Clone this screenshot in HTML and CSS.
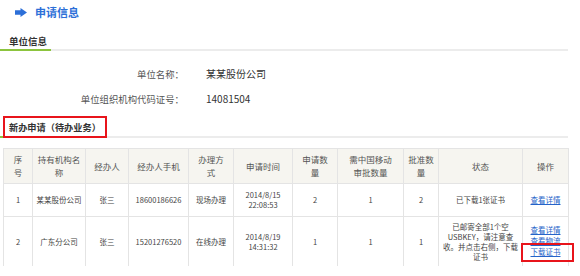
FILE: index.html
```html
<!DOCTYPE html>
<html lang="zh-CN">
<head>
<meta charset="utf-8">
<title>申请信息</title>
<link rel="stylesheet" href="styles.css">
</head>
<body>
<div class="page">
  <h1 class="page-title">
    <svg class="title-icon" width="12" height="9" viewBox="0 0 12 9"><path d="M0 2.2h5.5V0L12 4.5 5.5 9V6.8H0z" fill="#2c6fd8"/></svg>
    <span>申请信息</span>
  </h1>

  <div class="tab-bar">
    <span class="tab">单位信息</span>
  </div>

  <div class="info">
    <div class="info-row"><span class="label">单位名称：</span><span class="value">某某股份公司</span></div>
    <div class="info-row"><span class="label">单位组织机构代码证号：</span><span class="value">14081504</span></div>
  </div>

  <div class="tab-bar tab-bar-second">
    <span class="tab tab-marked">新办申请（待办业务）</span>
  </div>

  <table class="grid">
    <colgroup>
      <col style="width:29px"><col style="width:53px"><col style="width:43px"><col style="width:60px">
      <col style="width:45px"><col style="width:59px"><col style="width:45px"><col style="width:66px">
      <col style="width:35px"><col style="width:84px"><col style="width:46px">
    </colgroup>
    <thead>
      <tr>
        <th>序<br>号</th>
        <th>持有机构名<br>称</th>
        <th>经办人</th>
        <th>经办人手机</th>
        <th>办理方<br>式</th>
        <th>申请时间</th>
        <th>申请数<br>量</th>
        <th>需中国移动<br>审批数量</th>
        <th>批准数<br>量</th>
        <th>状态</th>
        <th>操作</th>
      </tr>
    </thead>
    <tbody>
      <tr class="row-1">
        <td>1</td>
        <td>某某股份公司</td>
        <td>张三</td>
        <td>18600186626</td>
        <td>现场办理</td>
        <td>2014/8/15<br>22:08:53</td>
        <td>2</td>
        <td>1</td>
        <td>2</td>
        <td>已下载1张证书</td>
        <td><a class="link" href="#">查看详情</a></td>
      </tr>
      <tr class="row-2">
        <td>2</td>
        <td>广东分公司</td>
        <td>张三</td>
        <td>15201276520</td>
        <td>在线办理</td>
        <td>2014/8/19<br>14:31:32</td>
        <td>1</td>
        <td>1</td>
        <td>1</td>
        <td class="status">已邮寄全部1个空<br>USBKEY，请注意查<br>收。并点击右侧，下载<br>证书</td>
        <td class="ops">
          <a class="link" href="#">查看详情</a>
          <a class="link" href="#">查看物流</a>
          <a class="link link-marked" href="#">下载证书</a>
        </td>
      </tr>
    </tbody>
  </table>
</div>
</body>
</html>
```

FILE: styles.css
```css
html, body {
  margin: 0;
  padding: 0;
  background: #ffffff;
}

body {
  font-family: "Noto Sans CJK SC", "Liberation Sans", sans-serif;
  color: #333333;
  width: 580px;
  height: 276px;
  overflow: hidden;
}

.page {
  width: 580px;
}

.page-title {
  margin: 0;
  height: 24px;
  display: flex;
  align-items: center;
  padding-left: 15px;
  font-size: 11px;
  font-weight: bold;
  color: #2c6fd8;
  line-height: 24px;
}

.title-icon {
  display: block;
  margin-right: 8px;
}

.tab-bar {
  margin-top: 10px;
  width: 568px;
  border-bottom: 2px solid #ececec;
  display: flex;
}

.tab {
  display: block;
  padding: 0 4px 1px 9px;
  margin-bottom: -2px;
  border-bottom: 2px solid #8cc43e;
  font-size: 9.5px;
  font-weight: bold;
  line-height: 14px;
  color: #333333;
}

.tab-bar-second {
  margin-top: 9px;
}

.tab-bar-second .tab {
  padding-bottom: 2px;
  padding-right: 6px;
  font-size: 9.2px;
}

.tab-marked {
  position: relative;
}

.tab-marked::after {
  content: "";
  position: absolute;
  left: 3px;
  right: 0;
  top: -4px;
  bottom: -2px;
  border: 2px solid #e8141b;
}

.info {
  padding-top: 10px;
}

.info-row {
  display: flex;
  align-items: center;
  height: 25px;
}

.label {
  width: 184px;
  text-align: right;
  font-size: 9.4px;
  color: #555555;
}

.value {
  margin-left: 22px;
  font-size: 10px;
  color: #333333;
}

.grid {
  margin-top: 10px;
  margin-left: 3px;
  width: 565px;
  border-collapse: collapse;
  table-layout: fixed;
}

.grid th,
.grid td {
  border: 1px solid #e4e4e4;
  text-align: center;
  vertical-align: middle;
  padding: 0;
}

.grid th {
  height: 34px;
  background: #f6f5f0;
  font-size: 8.5px;
  font-weight: normal;
  color: #555555;
  line-height: 13px;
}

.grid td {
  font-size: 7.5px;
  color: #444444;
  line-height: 10px;
}

.row-1 td {
  height: 32px;
}

.row-2 td {
  height: 49px;
  border-bottom-color: #ffffff;
}

.grid .status {
  line-height: 10px;
}

.link {
  color: #2563c9;
  text-decoration: underline;
}

.ops .link {
  display: block;
  line-height: 10.5px;
}

.ops .link-marked {
  position: relative;
  margin-top: 1px;
}

.link-marked::after {
  content: "";
  position: absolute;
  left: -2px;
  right: -6px;
  top: -4px;
  bottom: -4px;
  border: 2px solid #e8141b;
}
```
